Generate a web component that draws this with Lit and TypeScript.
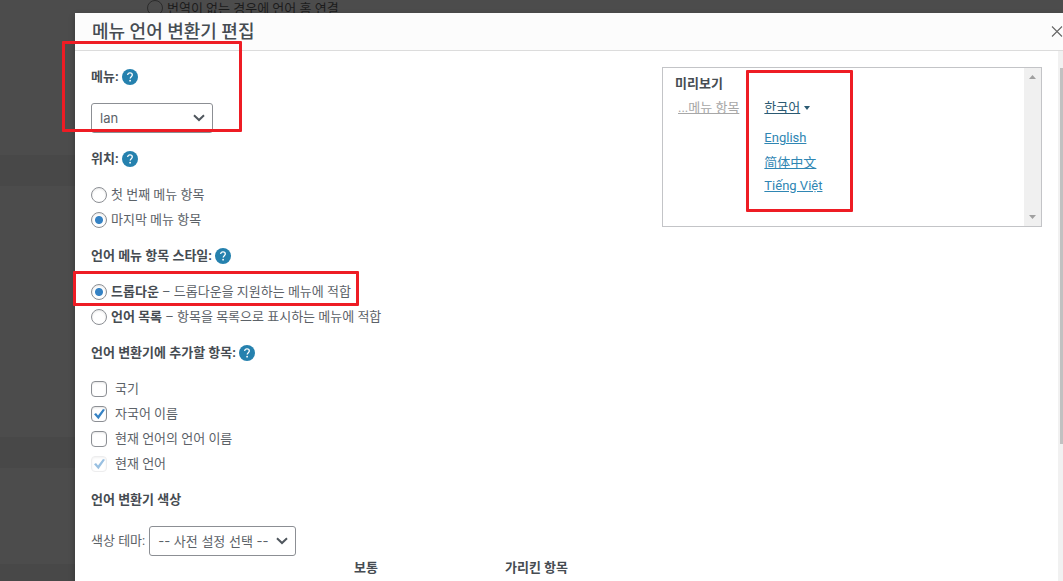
import { LitElement, html, css } from "lit";
import { customElement, property, state } from "lit/decorators.js";

interface Choice {
  id: string;
  strong?: string;
  text: string;
  disabled?: boolean;
}

const POSITIONS: Choice[] = [
  { id: "first", text: "첫 번째 메뉴 항목" },
  { id: "last", text: "마지막 메뉴 항목" },
];

const STYLES: Choice[] = [
  { id: "dropdown", strong: "드롭다운", text: " – 드롭다운을 지원하는 메뉴에 적합" },
  { id: "list", strong: "언어 목록", text: " – 항목을 목록으로 표시하는 메뉴에 적합" },
];

const INCLUDES: Choice[] = [
  { id: "flag", text: "국기" },
  { id: "native", text: "자국어 이름" },
  { id: "display", text: "현재 언어의 언어 이름" },
  { id: "current", text: "현재 언어", disabled: true },
];

@customElement("help-button")
export class HelpButton extends LitElement {
  static styles = css`
    :host {
      display: inline-flex;
    }
    .help {
      display: block;
      width: 16px;
      height: 16px;
      padding: 0;
      border: 0;
      background: none;
      cursor: pointer;
    }
    .help svg {
      display: block;
    }
  `;

  render() {
    return html`<button class="help" type="button" aria-label="도움말">
      <svg width="16" height="16" viewBox="0 0 16 16">
        <circle cx="8" cy="8" r="8" fill="#2581ae" />
        <path d="M5.7 6.1c0-1.5 1-2.3 2.3-2.3s2.3.8 2.3 2.1c0 1.7-2.1 1.8-2.1 3.6" fill="none" stroke="#fff" stroke-width="1.3" />
        <circle cx="8.1" cy="11.7" r="0.9" fill="#fff" />
      </svg>
    </button>`;
  }
}

@customElement("menu-preview")
export class MenuPreview extends LitElement {
  static styles = css`
    :host {
      display: flex;
      box-sizing: border-box;
      height: 160px;
      border: 1px solid #c3c4c7;
      font: 13px/24px Roboto, "Noto Sans CJK KR", sans-serif;
    }
    .content {
      flex: 1;
      padding: 4px 12px;
    }
    .title {
      margin: 0;
      font-size: 13px;
      font-weight: 700;
      color: #464c52;
    }
    .menu {
      display: flex;
      gap: 25px;
      padding-left: 3px;
    }
    .ghost {
      color: #a7a7a7;
    }
    .languages {
      display: flex;
      flex-direction: column;
      gap: 6px;
    }
    .current {
      display: flex;
      align-items: center;
      gap: 4px;
      height: 24px;
      color: #2b5a72;
    }
    .current a {
      color: inherit;
    }
    .list {
      margin: 0;
      padding: 0;
      list-style: none;
    }
    .list li {
      height: 24px;
    }
    .list a {
      color: #2f86b3;
    }
    .chinese {
      font-family: "Noto Sans CJK SC", sans-serif;
    }
    .track {
      display: flex;
      flex-direction: column;
      justify-content: space-between;
      align-items: center;
      width: 17px;
      padding: 7px 0;
      box-sizing: border-box;
      background: #f0f0f0;
    }
    svg {
      display: block;
    }
  `;

  render() {
    return html`
      <div class="content">
        <h3 class="title">미리보기</h3>
        <div class="menu">
          <a class="ghost" href="#">...메뉴 항목</a>
          <div class="languages">
            <div class="current">
              <a href="#">한국어</a>
              <svg width="6" height="4" viewBox="0 0 6 4"><path d="M0 0H6L3 4Z" fill="currentColor" /></svg>
            </div>
            <ul class="list">
              <li><a href="#">English</a></li>
              <li><a class="chinese" href="#" lang="zh-CN">简体中文</a></li>
              <li><a href="#">Tiếng Việt</a></li>
            </ul>
          </div>
        </div>
      </div>
      <div class="track">
        <svg width="7" height="4" viewBox="0 0 7 4"><path d="M0 4H7L3.5 0Z" fill="#a0a0a0" /></svg>
        <svg width="7" height="4" viewBox="0 0 7 4"><path d="M0 0H7L3.5 4Z" fill="#a0a0a0" /></svg>
      </div>
    `;
  }
}

@customElement("choice-group")
export class ChoiceGroup extends LitElement {
  @property() kind: "radio" | "checkbox" = "radio";
  @property() legend = "";
  @property({ attribute: false }) choices: Choice[] = [];
  @property({ attribute: false }) selected: string[] = [];

  static styles = css`
    :host {
      display: block;
    }
    .group {
      margin: 0;
      padding: 0;
      border: 0;
      min-width: 0;
    }
    .legend {
      display: flex;
      align-items: center;
      gap: 3px;
      height: 20px;
      margin-bottom: 16px;
      padding: 0;
      font-weight: 700;
      color: #464c52;
    }
    .rows {
      display: grid;
      gap: 5px;
    }
    .row {
      display: flex;
      align-items: center;
      gap: 4px;
      height: 20px;
      white-space: pre;
    }
    .row.checkbox {
      gap: 8px;
    }
    .input {
      appearance: none;
      flex: none;
      box-sizing: border-box;
      width: 16px;
      height: 16px;
      margin: 0;
      border: 1px solid #8c8f94;
      border-radius: 4px;
      background: #fff center / 14px 14px no-repeat;
      box-shadow: inset 0 1px 2px rgba(0, 0, 0, 0.1);
    }
    .input[type="radio"] {
      border-radius: 50%;
    }
    .input[type="radio"]:checked {
      background-image: radial-gradient(circle, #3582c4 3.5px, transparent 4.5px);
    }
    .input[type="checkbox"]:checked {
      background-image: url("data:image/svg+xml,%3Csvg xmlns='http://www.w3.org/2000/svg' viewBox='0 0 14 14'%3E%3Cpath d='M2 7.2L4 5.9L6 8.4L11 2L13 2.8L6.4 12.2Z' fill='%233582c4'/%3E%3C/svg%3E");
    }
    .input:disabled {
      opacity: 0.5;
      border-color: #dcdcde;
    }
    strong {
      color: #464c52;
    }
  `;

  private pick(id: string) {
    if (this.kind === "radio") this.selected = [id];
    else
      this.selected = this.selected.includes(id)
        ? this.selected.filter((s) => s !== id)
        : [...this.selected, id];
  }

  render() {
    return html`<fieldset class="group">
      <legend class="legend">${this.legend}<help-button></help-button></legend>
      <div class="rows">
        ${this.choices.map(
          (c) => html`<label class="row ${this.kind}">
            <input
              class="input"
              type=${this.kind}
              name="choice"
              .checked=${this.selected.includes(c.id)}
              ?disabled=${c.disabled}
              @change=${() => this.pick(c.id)}
            /><span>${c.strong ? html`<strong>${c.strong}</strong>` : ""}${c.text}</span>
          </label>`
        )}
      </div>
    </fieldset>`;
  }
}

@customElement("app-root")
export class AppRoot extends LitElement {
  @state() private menu = "lan";

  static styles = css`
    :host {
      display: block;
      position: relative;
      height: 100vh;
      overflow: hidden;
      background: #4c4c4c;
      color: #5c6268;
      font: 13px/20px Roboto, "Noto Sans CJK KR", sans-serif;
    }
    .page {
      display: flex;
      flex-direction: column;
    }
    .page-row {
      display: flex;
      align-items: flex-start;
      gap: 4px;
      box-sizing: border-box;
      height: 155px;
      padding-left: 147px;
      line-height: 18px;
      color: #1c1c1c;
    }
    .page-radio {
      appearance: none;
      box-sizing: border-box;
      width: 16px;
      height: 16px;
      margin: 0;
      border: 1px solid #2b2b2b;
      border-radius: 50%;
    }
    .band {
      height: 31px;
      background: #484848;
    }
    .space {
      height: 251px;
    }
    .space.short {
      height: 96px;
    }
    .dialog {
      position: absolute;
      inset: 13px 0 0 75px;
      display: flex;
      flex-direction: column;
      background: #fff;
      box-shadow: 0 3px 6px rgba(0, 0, 0, 0.3);
    }
    .header {
      display: flex;
      justify-content: space-between;
      align-items: center;
      height: 37px;
      padding-left: 17px;
      overflow: hidden;
      background: #fcfcfc;
      border-bottom: 1px solid #dcdcdc;
    }
    .title {
      margin: 0;
      font-size: 18px;
      line-height: 36px;
      font-weight: 500;
      color: #464c52;
    }
    .close {
      flex: none;
      width: 12px;
      height: 12px;
      padding: 0;
      border: 0;
      background: none;
    }
    .close svg {
      display: block;
    }
    .body {
      flex: 1;
      min-height: 0;
      display: flex;
    }
    .content {
      flex: 1;
      min-width: 0;
      display: flex;
      align-items: flex-start;
      gap: 16px;
      padding: 16px;
      overflow: hidden;
    }
    .form {
      flex: 1;
      min-width: 0;
      display: grid;
      gap: 16px;
    }
    .preview {
      flex: 0 0 380px;
    }
    .field {
      display: grid;
      gap: 16px;
      justify-items: start;
    }
    .label {
      display: flex;
      align-items: center;
      gap: 3px;
      height: 20px;
      margin: 0;
      font-size: 13px;
      font-weight: 700;
      color: #464c52;
    }
    .inline {
      display: flex;
      align-items: center;
      gap: 4px;
    }
    .select {
      appearance: none;
      box-sizing: border-box;
      width: 122px;
      height: 30px;
      padding: 0 24px 0 8px;
      border: 1px solid #8c8f94;
      border-radius: 3px;
      color: #5c6268;
      font: 13px/20px Inter, "Noto Sans CJK KR", sans-serif;
      background: #fff
        url("data:image/svg+xml,%3Csvg xmlns='http://www.w3.org/2000/svg' viewBox='0 0 12 8'%3E%3Cpath d='M1 1.2L6 6L11 1.2' fill='none' stroke='%2350575e' stroke-width='2'/%3E%3C/svg%3E")
        right 7px center / 12px 8px no-repeat;
    }
    .select.wide {
      width: 147px;
    }
    .colors {
      margin-top: -14px;
      border-collapse: collapse;
      table-layout: fixed;
      width: 100%;
    }
    .colors th {
      height: 20px;
      padding: 0;
      text-align: left;
      font-weight: 700;
      color: #464c52;
    }
    .colors .name {
      width: 263px;
      padding: 0;
    }
    .colors .normal {
      width: 151px;
    }
    .scroll {
      box-sizing: border-box;
      width: 5px;
      padding: 17px 0 0 2px;
      background: #f1f1f1;
    }
    .thumb {
      height: 376px;
      background: #c1c1c1;
    }
    .mark {
      position: absolute;
      box-sizing: border-box;
      border: 3px solid #ee1c24;
      border-radius: 1px;
      pointer-events: none;
    }
    .mark.menu {
      left: 62px;
      top: 41px;
      width: 180px;
      height: 91px;
    }
    .mark.style {
      left: 73px;
      top: 271px;
      width: 286px;
      height: 35px;
    }
    .mark.languages {
      left: 746px;
      top: 70px;
      width: 107px;
      height: 142px;
    }
  `;

  render() {
    return html`
      <div class="page">
        <label class="page-row"><input class="page-radio" type="radio" />번역이 없는 경우에 언어 홈 연결</label>
        <div class="band"></div>
        <div class="space"></div>
        <div class="band"></div>
        <div class="space short"></div>
        <div class="band"></div>
      </div>

      <section class="dialog" role="dialog" aria-labelledby="title">
        <header class="header">
          <h1 class="title" id="title">메뉴 언어 변환기 편집</h1>
          <button class="close" type="button" aria-label="닫기">
            <svg width="12" height="12" viewBox="0 0 12 12"><path d="M1 0.5L11 10.5M11 0.5L1 10.5" stroke="#666" stroke-width="1.1" /></svg>
          </button>
        </header>
        <div class="body">
          <div class="content">
            <div class="form">
              <div class="field">
                <div class="label"><label for="menu">메뉴:</label><help-button></help-button></div>
                <select class="select" id="menu" .value=${this.menu}>
                  <option value="lan">lan</option>
                </select>
              </div>
              <choice-group legend="위치:" .choices=${POSITIONS} .selected=${["last"]}></choice-group>
              <choice-group legend="언어 메뉴 항목 스타일:" .choices=${STYLES} .selected=${["dropdown"]}></choice-group>
              <choice-group
                kind="checkbox"
                legend="언어 변환기에 추가할 항목:"
                .choices=${INCLUDES}
                .selected=${["native", "current"]}
              ></choice-group>
              <div class="field">
                <h2 class="label">언어 변환기 색상</h2>
                <div class="inline">
                  <label for="theme">색상 테마:</label>
                  <select class="select wide" id="theme">
                    <option>-- 사전 설정 선택 --</option>
                  </select>
                </div>
              </div>
              <table class="colors">
                <thead>
                  <tr>
                    <td class="name"></td>
                    <th class="normal" scope="col">보통</th>
                    <th scope="col">가리킨 항목</th>
                  </tr>
                </thead>
              </table>
            </div>
            <menu-preview class="preview"></menu-preview>
          </div>
          <div class="scroll"><div class="thumb"></div></div>
        </div>
      </section>

      <div class="mark menu"></div>
      <div class="mark style"></div>
      <div class="mark languages"></div>
    `;
  }
}
